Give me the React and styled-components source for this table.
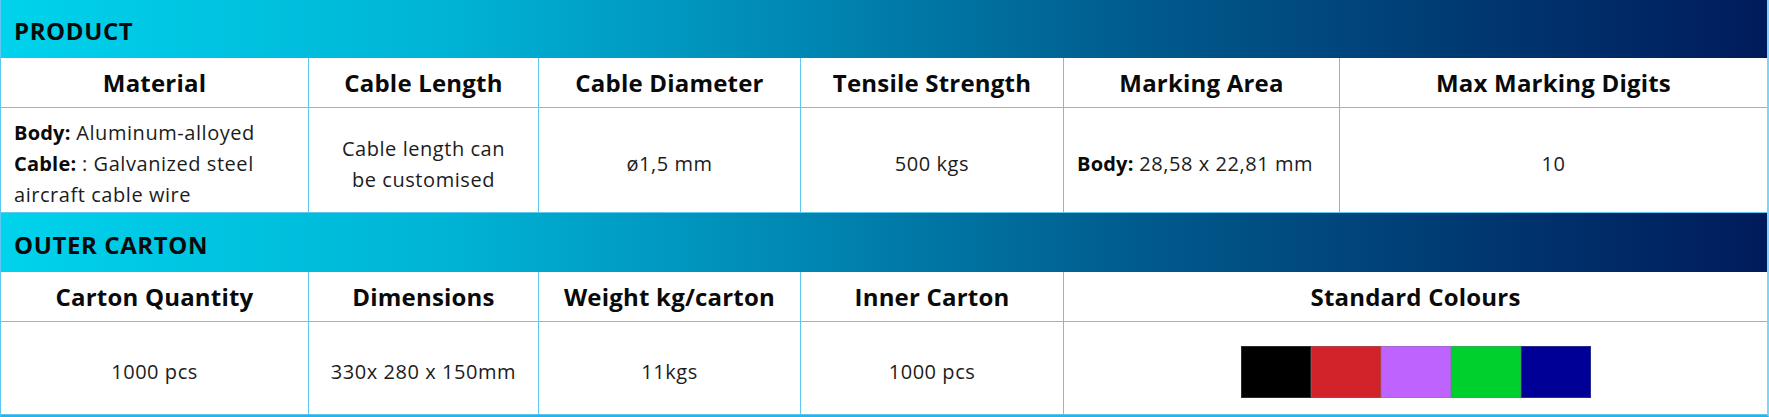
import React from "react";
import styled, { createGlobalStyle } from "styled-components";

const GlobalStyle = createGlobalStyle`
  html, body {
    margin: 0;
    padding: 0;
    background: #fff;
  }
  body {
    font-family: "Open Sans", "Liberation Sans", sans-serif;
    color: #111;
  }
`;

const Sheet = styled.div`
  width: 1769px;
  border-left: 1px solid #5fc8f2;
  border-right: 2px solid #7fd4f7;
  border-bottom: 2px solid #1ab8f0;
  box-sizing: border-box;
`;

const SectionBar = styled.div`
  height: ${(p) => p.h}px;
  display: flex;
  align-items: center;
  padding: 3px 0 0 13px;
  background: linear-gradient(
    90deg,
    #00d3ec 0%,
    #00b4d6 25%,
    #0088b4 45%,
    #005a8c 65%,
    #003b74 82%,
    #001b5b 100%
  );
  font-weight: 700;
  font-size: 24px;
  letter-spacing: 0.6px;
  color: #0a0a0a;
  box-sizing: border-box;
`;

const Row = styled.div`
  display: grid;
  grid-template-columns: ${(p) => p.cols};
  height: ${(p) => p.h}px;
`;

const Cell = styled.div`
  display: flex;
  align-items: center;
  justify-content: ${(p) => (p.left ? "flex-start" : "center")};
  text-align: ${(p) => (p.left ? "left" : "center")};
  padding: 7px 13px 0;
  border-right: 1px solid #5fc8f2;
  border-bottom: 1px solid #5fc8f2;
  box-sizing: border-box;
  font-size: 20px;
  letter-spacing: 0.55px;
  line-height: 31px;
  color: #1c1c1c;
  white-space: nowrap;

  &:last-child {
    border-right: none;
  }
`;

const HeadCell = styled(Cell)`
  font-weight: 700;
  font-size: 24px;
  letter-spacing: 0.2px;
  color: #0a0a0a;
  padding-top: 0;
`;

const Label = styled.b`
  font-weight: 700;
  letter-spacing: 0.2px;
  color: #0a0a0a;
`;

const Swatches = styled.div`
  display: flex;
  margin-top: 0;
`;

const Swatch = styled.div`
  width: 70px;
  height: 52px;
  background: ${(p) => p.color};
  box-shadow: inset 0 0 0 1px rgba(120, 120, 140, 0.35);
`;

const productCols = "308px 230px 262px 263px 276px 1fr";
const cartonCols = "308px 230px 262px 263px 1fr";

const colours = ["#000000", "#d2232a", "#bf63ff", "#00d02e", "#000096"];

const App = () => {
  return (
    <>
      <GlobalStyle />
      <Sheet>
        <SectionBar h={58}>PRODUCT</SectionBar>
        <Row cols={productCols} h={50}>
          <HeadCell>Material</HeadCell>
          <HeadCell>Cable Length</HeadCell>
          <HeadCell>Cable Diameter</HeadCell>
          <HeadCell>Tensile Strength</HeadCell>
          <HeadCell>Marking Area</HeadCell>
          <HeadCell>Max Marking Digits</HeadCell>
        </Row>
        <Row cols={productCols} h={105}>
          <Cell left>
            <div>
              <Label>Body:</Label> Aluminum-alloyed
              <br />
              <Label>Cable:</Label> : Galvanized steel
              <br />
              aircraft cable wire
            </div>
          </Cell>
          <Cell>
            <div>
              Cable length can
              <br />
              be customised
            </div>
          </Cell>
          <Cell>ø1,5 mm</Cell>
          <Cell>500 kgs</Cell>
          <Cell left>
            <div>
              <Label>Body:</Label> 28,58 x 22,81 mm
            </div>
          </Cell>
          <Cell>10</Cell>
        </Row>
        <SectionBar h={59}>OUTER CARTON</SectionBar>
        <Row cols={cartonCols} h={50}>
          <HeadCell>Carton Quantity</HeadCell>
          <HeadCell>Dimensions</HeadCell>
          <HeadCell>Weight kg/carton</HeadCell>
          <HeadCell>Inner Carton</HeadCell>
          <HeadCell>Standard Colours</HeadCell>
        </Row>
        <Row cols={cartonCols} h={93}>
          <Cell>1000 pcs</Cell>
          <Cell>330x 280 x 150mm</Cell>
          <Cell>11kgs</Cell>
          <Cell>1000 pcs</Cell>
          <Cell>
            <Swatches>
              {colours.map((c) => (
                <Swatch key={c} color={c} />
              ))}
            </Swatches>
          </Cell>
        </Row>
      </Sheet>
    </>
  );
};

export default App;
